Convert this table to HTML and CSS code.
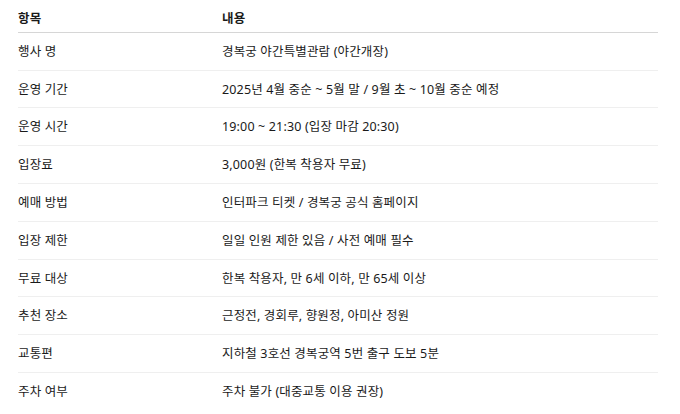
FILE: index.html
```html
<!DOCTYPE html>
<html lang="ko">
<head>
<meta charset="utf-8">
<link rel="stylesheet" href="styles.css">
</head>
<body>
<table class="info">
  <thead>
    <tr><th class="c1">항목</th><th>내용</th></tr>
  </thead>
  <tbody>
    <tr><td>행사 명</td><td>경복궁 야간특별관람 (야간개장)</td></tr>
    <tr><td>운영 기간</td><td>2025년 4월 중순 ~ 5월 말 / 9월 초 ~ 10월 중순 예정</td></tr>
    <tr><td>운영 시간</td><td>19:00 ~ 21:30 (입장 마감 20:30)</td></tr>
    <tr><td>입장료</td><td>3,000원 (한복 착용자 무료)</td></tr>
    <tr><td>예매 방법</td><td>인터파크 티켓 / 경복궁 공식 홈페이지</td></tr>
    <tr><td>입장 제한</td><td>일일 인원 제한 있음 / 사전 예매 필수</td></tr>
    <tr><td>무료 대상</td><td>한복 착용자, 만 6세 이하, 만 65세 이상</td></tr>
    <tr><td>추천 장소</td><td>근정전, 경회루, 향원정, 아미산 정원</td></tr>
    <tr><td>교통편</td><td>지하철 3호선 경복궁역 5번 출구 도보 5분</td></tr>
    <tr><td>주차 여부</td><td>주차 불가 (대중교통 이용 권장)</td></tr>
  </tbody>
</table>
</body>
</html>
```
FILE: styles.css
```css
html, body {
  margin: 0;
  padding: 0;
  background: #ffffff;
}
body {
  font-family: "Noto Sans", "Noto Sans CJK KR", sans-serif;
  font-size: 12.5px;
  letter-spacing: 0.15px;
  color: #1a1a1a;
}
.info {
  margin-left: 18px;
  width: 640px;
  border-collapse: collapse;
}
.info th,
.info td {
  text-align: left;
  line-height: 16.8px;
  padding: 11px 0 9px 0;
  vertical-align: middle;
}
.info th {
  font-weight: 700;
  padding-top: 11px;
  padding-bottom: 4px;
  border-bottom: 1px solid #d6d6d6;
}
.info td {
  border-bottom: 1px solid #efefef;
}
.info tbody tr:last-child td {
  border-bottom: none;
}
.info .c1 {
  width: 204px;
}
```
